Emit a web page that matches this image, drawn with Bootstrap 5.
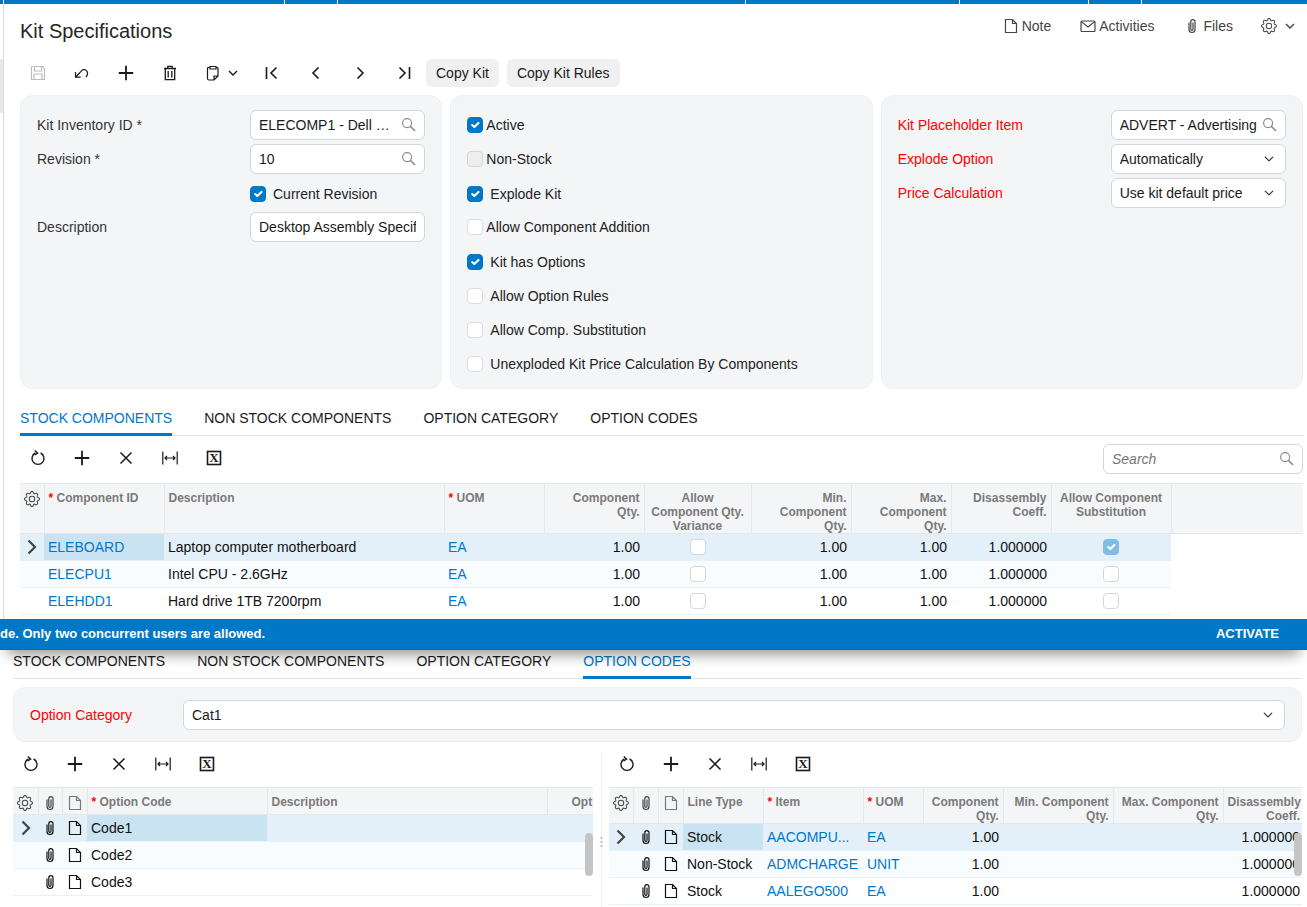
<!DOCTYPE html>
<html lang="en">
<head>
<meta charset="utf-8">
<title>Kit Specifications</title>
<link href="https://cdn.jsdelivr.net/npm/bootstrap@5.3.0/dist/css/bootstrap.min.css" rel="stylesheet">
<style>
:root{--ac:#0078c8;--line:#e6e7e9;--pan:#f4f5f7}
html,body{height:907px;overflow:hidden}
body{font-family:"Liberation Sans",Arial,sans-serif;font-size:14px;color:#1a1a1a;background:#fff;line-height:20px}
.strip{height:4px;background:var(--ac) linear-gradient(#fff,#fff) no-repeat;background-image:linear-gradient(#fff,#fff),linear-gradient(#fff,#fff),linear-gradient(#fff,#fff),linear-gradient(#fff,#fff),linear-gradient(#fff,#fff),linear-gradient(#fff,#fff),linear-gradient(#fff,#fff);background-size:1px 100%;background-repeat:no-repeat;background-position:3px 0,284px 0,337px 0,745px 0,959px 0,1088px 0,1141px 0}
.ic{width:16px;height:16px;display:block;fill:none;stroke:currentColor;stroke-width:1.2;flex:none}
.ic-f{fill:currentColor;stroke:none}
.upper{height:615px;overflow:hidden}
.edge{width:3px;flex:none}
.edge i{display:block;height:54px;margin-top:55px;background:#e8e8e8}
.upin{flex:1;min-width:0;border-left:1px solid #d9d9d9;padding:0 4px 0 16px}
.pg-title{font-size:20px;line-height:24px;color:#262626;padding-top:15px;margin:0;font-weight:400}
.titlerow{height:55px}
.acts{padding-top:10px;padding-right:8px;color:#444;line-height:24px}
.acts>span{display:flex;align-items:center;gap:3px}
.acts .a1{margin-right:29px}.acts .a2{margin-right:30px}.acts .a3{margin-right:28px}
.tbar{height:28px;margin-left:-4px}
.tb{width:44px;height:28px;padding:0;border:0;display:flex;align-items:center;justify-content:center;color:#1a1a1a;border-radius:0;flex:none}
.tb-w{width:58px;gap:7px}
.tb-dim{color:#bdbdbd}
.ic-s{width:10px;height:10px}
.copybtn{height:28px;background:#f0f0f0;border:0;border-radius:6px;padding:0 10px;font-size:14px;color:#1a1a1a;margin-right:8px;line-height:28px}
.tbar .copybtn:first-of-type{margin-left:4px}
.panels{margin-top:8px;height:294px;gap:8px}
.pan{background:var(--pan);border:1px solid #eef0f2;border-radius:12px;flex:1 1 0;min-width:0;padding:12px 16px 0}
.frow{height:34px;display:flex;align-items:center}
.flab{width:213px;flex:none;color:#333}
.req{color:#f00}
.fval{width:175px;position:relative;flex:none}
.fld{height:30px;border:1px solid #d5d6d9;border-radius:6px;padding:0 8px;font-size:14px;color:#1a1a1a;background-color:#fff;box-shadow:none;line-height:28px;font-family:inherit}
.fld.pe{padding-right:30px;text-overflow:ellipsis}
.fld.pe2{padding-right:28px}
.form-select.fld{background-size:12px 10px;background-position:right 10px center;padding-right:26px}
.srch{position:absolute;right:9px;top:7px;color:#8a8a8a;width:15px;height:15px}
.form-check-input.cb{width:16px;height:16px;margin:0;border:1px solid #dcdcdc;border-radius:4px;flex:none;background-color:#fff;opacity:1}
.form-check-input.cb:checked{background-color:var(--ac);border-color:var(--ac);background-size:14px}
.form-check-input.cb:disabled{background-color:#eee;opacity:1;border-color:#d4d4d4}
.cbw{display:flex;align-items:center;gap:7px;color:#222}
.cbn{gap:3px}
.up1{margin-top:1px;margin-bottom:-1px}
.tabs{height:35px;margin-top:12px;border-bottom:1px solid #e2e3e5;flex-wrap:nowrap}
.tabs .nav-link{padding:0;margin-right:32px;height:35px;line-height:34px;color:#1a1a1a;font-size:14px;text-transform:uppercase;border-radius:0}
.tabs .nav-link.active{color:var(--ac);border-bottom:3px solid var(--ac)}
.gtool{height:47px;padding-top:8px}
.gtool-i{margin-left:-4px}
.gs{width:200px;position:relative}
.fld.gi{font-style:italic;padding-right:28px}
.fld.gi::placeholder{color:#777}
.gclip{overflow:hidden;position:relative}
.grid{margin:0;table-layout:fixed;border-collapse:collapse;font-size:14px}
.grid.table>:not(caption)>*>*{padding:0 4px;background:transparent;box-shadow:none;border:0;color:#111;white-space:nowrap;overflow:hidden;vertical-align:middle;line-height:20px;height:27px}
.grid.table>thead>tr>th{background:var(--pan);font-size:12px;font-weight:700;color:#7a7a7a;line-height:14px;vertical-align:top;padding:7px 4px 0;border-top:1px solid var(--line);border-bottom:1px solid var(--line);border-right:1px solid var(--line);white-space:normal}
.grid.table>thead>tr>th:last-child{border-right:0}
.grid.table>tbody>tr>td{border-bottom:1px solid #e8f1f7}
.grid.table>tbody>tr.sel>td{background:#e3f0f9}
.grid.table>tbody>tr.alt>td{background:#f9fcfe}
.grid.table>tbody>tr>td.cur{background:#cae3f3}
.grid.table>tbody>tr>td.none{background:#fff;border-bottom:0}
.grid.table>thead>tr>th.ctr,.grid.table>tbody>tr>td.ctr{text-align:center}
.grid.table>thead>tr>th.rt,.grid.table>tbody>tr>td.rt{text-align:right}
.grid.table>thead>tr>th.ico{padding:7px 0 0}
.grid.table>tbody>tr>td.ico{padding:0}
.grid.table>thead>tr>th.np{white-space:nowrap}
.grid a{color:var(--ac);text-decoration:none}
.grid .ic{margin:0 auto}
.grid .form-check-input.cb{display:block;margin:0 auto;border-color:#d8d6d8}
.grid .form-check-input.cb:checked:disabled{background-color:#7fbce6;border-color:#7fbce6}
.gic{color:#444}
.rowh th{height:58px}
.rowh2 th{height:45px}
.t1{width:1283px}
.t1 col:nth-child(1){width:24px}.t1 col:nth-child(2){width:120px}.t1 col:nth-child(3){width:280px}.t1 col:nth-child(4),.t1 col:nth-child(5){width:100px}.t1 col:nth-child(6){width:107px}.t1 col:nth-child(7),.t1 col:nth-child(8),.t1 col:nth-child(9){width:100px}.t1 col:nth-child(10){width:120px}.t1 col:nth-child(11){width:132px}
.t2{width:674px}
.t2 col:nth-child(1){width:25px}.t2 col:nth-child(2){width:24px}.t2 col:nth-child(3){width:25px}.t2 col:nth-child(4){width:180px}.t2 col:nth-child(5){width:280px}.t2 col:nth-child(6){width:140px}
.t3{width:695px}
.t3 col:nth-child(1){width:24px}.t3 col:nth-child(2),.t3 col:nth-child(3){width:25px}.t3 col:nth-child(4){width:80px}.t3 col:nth-child(5){width:100px}.t3 col:nth-child(6){width:60px}.t3 col:nth-child(7){width:80px}.t3 col:nth-child(8),.t3 col:nth-child(9){width:110px}.t3 col:nth-child(10){width:81px}
.pl24{padding-left:24px!important}
.banner{height:31px;background:var(--ac);color:#fff;font-weight:700;font-size:13px;position:relative;z-index:3;box-shadow:0 12px 14px -8px rgba(0,0,0,.45);line-height:30px;padding-right:28px;border-bottom:1px solid #0068ad}
.lower{height:257px;overflow:hidden;padding:0 5px 0 13px}
.tabs2{height:29px;margin-top:0}
.tabs2 .nav-link{height:29px;line-height:22px}
.catpan{margin-top:8px;height:55px;padding:12px 16px;display:flex;align-items:center;flex:none}
.catlab{width:153px;flex:none;color:#f00}
.lower .form-select.fld{flex:1}
.split{height:165px}
.gleft{width:580px;flex:none;position:relative}
.gright{flex:1;min-width:0;position:relative}
.splitter{width:16px;flex:none;position:relative;margin-top:9px}
.splitter::before{content:"";display:block;width:1px;height:100%;margin-left:8px;background:#efefef}
.sdots{position:absolute;left:7px;top:85px;width:3px;height:11px;background:radial-gradient(circle,#bdbdbd 1px,transparent 1.2px) 0 0/3px 4px repeat-y}
.gt2{height:45px;padding-top:8px;padding-bottom:7px}
.gleft .gt2{margin-left:-4px}
.gright .gt2{margin-left:-4px}
.vbar{position:absolute;right:0;top:91px;width:8px;height:43px;background:#c4c4c4;border-radius:4px}
.gright .vbar{right:0}
.vtrack{position:absolute;right:0;top:91px;bottom:0;width:8px;background:#fff}
</style>
</head>
<body>
<svg width="0" height="0" class="position-absolute">
<defs>
<symbol id="i-doc" viewBox="0 0 16 16"><path d="M2.5 1.5h7l4 4v9h-11z M9.5 1.5v4h4"/></symbol>
<symbol id="i-clip" viewBox="0 0 16 16"><path d="M5 4.5v7a3 3 0 0 0 6 0V3.7a2.1 2.1 0 0 0-4.2 0v7.5a1.1 1.1 0 0 0 2.2 0V4.5"/></symbol>
<symbol id="i-mail" viewBox="0 0 16 16"><rect x="1" y="3" width="14" height="10.5" rx="1"/><path d="M1.3 3.6 8 9l6.7-5.4"/></symbol>
<symbol id="i-gear" viewBox="0 0 16 16"><path d="M8 4.754a3.246 3.246 0 1 0 0 6.492 3.246 3.246 0 0 0 0-6.492zM5.754 8a2.246 2.246 0 1 1 4.492 0 2.246 2.246 0 0 1-4.492 0z"/><path d="M9.796 1.343c-.527-1.79-3.065-1.79-3.592 0l-.094.319a.873.873 0 0 1-1.255.52l-.292-.16c-1.64-.892-3.433.902-2.54 2.541l.159.292a.873.873 0 0 1-.52 1.255l-.319.094c-1.79.527-1.79 3.065 0 3.592l.319.094a.873.873 0 0 1 .52 1.255l-.16.292c-.892 1.64.901 3.434 2.541 2.54l.292-.159a.873.873 0 0 1 1.255.52l.094.319c.527 1.79 3.065 1.79 3.592 0l.094-.319a.873.873 0 0 1 1.255-.52l.292.16c1.64.893 3.434-.902 2.54-2.541l-.159-.292a.873.873 0 0 1 .52-1.255l.319-.094c1.79-.527 1.79-3.065 0-3.592l-.319-.094a.873.873 0 0 1-.52-1.255l.16-.292c.893-1.64-.902-3.433-2.541-2.54l-.292.159a.873.873 0 0 1-1.255-.52l-.094-.319zm-2.633.283c.246-.835 1.428-.835 1.674 0l.094.319a1.873 1.873 0 0 0 2.693 1.115l.291-.16c.764-.415 1.6.42 1.184 1.185l-.159.292a1.873 1.873 0 0 0 1.116 2.692l.318.094c.835.246.835 1.428 0 1.674l-.319.094a1.873 1.873 0 0 0-1.115 2.693l.16.291c.415.764-.42 1.6-1.185 1.184l-.291-.159a1.873 1.873 0 0 0-2.693 1.116l-.094.318c-.246.835-1.428.835-1.674 0l-.094-.319a1.873 1.873 0 0 0-2.692-1.115l-.292.16c-.764.415-1.6-.42-1.184-1.185l.159-.291A1.873 1.873 0 0 0 1.945 8.93l-.319-.094c-.835-.246-.835-1.428 0-1.674l.319-.094A1.873 1.873 0 0 0 3.06 4.377l-.16-.292c-.415-.764.42-1.6 1.185-1.184l.292.159a1.873 1.873 0 0 0 2.692-1.115l.094-.319z"/></symbol>
<symbol id="i-down" viewBox="0 0 10 10"><path d="M1 3l4 4 4-4" stroke-width="1.4"/></symbol>
<symbol id="i-search" viewBox="0 0 16 16"><circle cx="6.5" cy="6.5" r="4.8"/><path d="M10 10l5 5" stroke-width="1.6"/></symbol>
<symbol id="i-save" viewBox="0 0 16 16"><path d="M1.5 1.5h11l2 2v11h-13z M4.5 1.5v4.5h7v-4.5 M4 14.5v-5.5h8v5.5"/></symbol>
<symbol id="i-undo" viewBox="0 0 16 16"><path d="M1.5 7v5.2h5.2 M1.7 12 7 6.3a3.6 3.6 0 0 1 6 0c1 1.7.7 3.6-1 5.7"/></symbol>
<symbol id="i-plus" viewBox="0 0 16 16"><path d="M8 .8v14.4M.8 8h14.4" stroke-width="1.8"/></symbol>
<symbol id="i-trash" viewBox="0 0 16 16"><path d="M2 3.5h12 M5.8 3.5V1.3h4.4v2.2 M3.3 3.5v11.2h9.4V3.5 M6.2 6v6.5 M9.8 6v6.5" stroke-width="1.3"/></symbol>
<symbol id="i-board" viewBox="0 0 16 16"><path d="M5 2.5H3.5a1 1 0 0 0-1 1v10a1.5 1.5 0 0 0 1.5 1.5h5l4-4v-7.5a1 1 0 0 0-1-1H11 M5 1.5h6v2.5H5z M9 15v-4h4"/></symbol>
<symbol id="i-first" viewBox="0 0 16 16"><path d="M2.5 2v12 M12.5 2.5 7 8l5.5 5.5" stroke-width="1.6"/></symbol>
<symbol id="i-prev" viewBox="0 0 16 16"><path d="M10.5 2.5 5 8l5.500 5.500" stroke-width="1.6"/></symbol>
<symbol id="i-next" viewBox="0 0 16 16"><path d="M5.500 2.500 11 8l-5.500 5.500" stroke-width="1.6"/></symbol>
<symbol id="i-last" viewBox="0 0 16 16"><path d="M13.500 2v12 M3.500 2.500 9 8l-5.500 5.500" stroke-width="1.6"/></symbol>
<symbol id="i-refresh" viewBox="0 0 16 16"><path d="M5.400 3a6 6 0 1 0 5.200 0" stroke-width="1.400"/><path d="M5.200 .8 8 3.400 5 5.200" stroke-width="1.400" transform="translate(-.4 -.2)"/></symbol>
<symbol id="i-x" viewBox="0 0 16 16"><path d="M2.500 2.500l11 11m0-11-11 11" stroke-width="1.500"/></symbol>
<symbol id="i-fit" viewBox="0 0 16 16"><path d="M.8 1.500v13 M15.200 1.500v13 M3 8h10 M5 6 3 8l2 2 M11 6l2 2-2 2"/></symbol>
<symbol id="i-xl" viewBox="0 0 16 16"><rect x="1.500" y="1.500" width="13" height="13" stroke-width="1.600"/><text x="8" y="12.300" text-anchor="middle" font-family="Liberation Serif,serif" font-weight="700" font-size="13" fill="currentColor" stroke="none">X</text></symbol>
<symbol id="i-exp" viewBox="0 0 16 16"><path d="M4.500 1.500 11 8l-6.500 6.500" stroke-width="2.200"/></symbol>
</defs>
</svg>

<div class="strip"></div>

<div class="upper d-flex">
  <div class="edge"><i></i></div>
  <div class="upin">
    <div class="titlerow d-flex justify-content-between align-items-start">
      <h1 class="pg-title">Kit Specifications</h1>
      <div class="acts d-flex">
        <span class="a1"><svg class="ic"><use href="#i-doc"/></svg>Note</span>
        <span class="a2"><svg class="ic"><use href="#i-mail"/></svg>Activities</span>
        <span class="a3"><svg class="ic"><use href="#i-clip"/></svg>Files</span>
        <span class="gap-2"><svg class="ic ic-f"><use href="#i-gear"/></svg><svg class="ic ic-s"><use href="#i-down"/></svg></span>
      </div>
    </div>

    <div class="tbar d-flex align-items-center">
      <button class="btn tb tb-dim"><svg class="ic"><use href="#i-save"/></svg></button>
      <button class="btn tb"><svg class="ic"><use href="#i-undo"/></svg></button>
      <button class="btn tb"><svg class="ic"><use href="#i-plus"/></svg></button>
      <button class="btn tb"><svg class="ic"><use href="#i-trash"/></svg></button>
      <button class="btn tb tb-w"><svg class="ic"><use href="#i-board"/></svg><svg class="ic ic-s"><use href="#i-down"/></svg></button>
      <button class="btn tb"><svg class="ic"><use href="#i-first"/></svg></button>
      <button class="btn tb"><svg class="ic"><use href="#i-prev"/></svg></button>
      <button class="btn tb"><svg class="ic"><use href="#i-next"/></svg></button>
      <button class="btn tb"><svg class="ic"><use href="#i-last"/></svg></button>
      <button class="btn copybtn">Copy Kit</button>
      <button class="btn copybtn">Copy Kit Rules</button>
    </div>

    <div class="panels d-flex">
      <div class="pan">
        <div class="frow"><div class="flab">Kit Inventory ID *</div><div class="fval"><input class="form-control fld pe" value="ELECOMP1 - Dell Desktop Kit" readonly><svg class="ic srch"><use href="#i-search"/></svg></div></div>
        <div class="frow"><div class="flab">Revision *</div><div class="fval"><input class="form-control fld pe" value="10" readonly><svg class="ic srch"><use href="#i-search"/></svg></div></div>
        <div class="frow up1"><div class="flab"></div><label class="cbw"><input type="checkbox" class="form-check-input cb" checked>Current Revision</label></div>
        <div class="frow"><div class="flab">Description</div><div class="fval"><input class="form-control fld" value="Desktop Assembly Specification" readonly></div></div>
      </div>
      <div class="pan">
        <div class="frow"><label class="cbw cbn"><input type="checkbox" class="form-check-input cb" checked>Active</label></div>
        <div class="frow"><label class="cbw cbn"><input type="checkbox" class="form-check-input cb" disabled>Non-Stock</label></div>
        <div class="frow up1"><label class="cbw"><input type="checkbox" class="form-check-input cb" checked>Explode Kit</label></div>
        <div class="frow"><label class="cbw cbn"><input type="checkbox" class="form-check-input cb">Allow Component Addition</label></div>
        <div class="frow up1"><label class="cbw"><input type="checkbox" class="form-check-input cb" checked>Kit has Options</label></div>
        <div class="frow up1"><label class="cbw"><input type="checkbox" class="form-check-input cb">Allow Option Rules</label></div>
        <div class="frow up1"><label class="cbw"><input type="checkbox" class="form-check-input cb">Allow Comp. Substitution</label></div>
        <div class="frow up1"><label class="cbw"><input type="checkbox" class="form-check-input cb">Unexploded Kit Price Calculation By Components</label></div>
      </div>
      <div class="pan">
        <div class="frow"><div class="flab req">Kit Placeholder Item</div><div class="fval"><input class="form-control fld pe2" value="ADVERT - Advertising" readonly><svg class="ic srch"><use href="#i-search"/></svg></div></div>
        <div class="frow"><div class="flab req">Explode Option</div><div class="fval"><select class="form-select fld"><option>Automatically</option></select></div></div>
        <div class="frow"><div class="flab req">Price Calculation</div><div class="fval"><select class="form-select fld"><option>Use kit default price</option></select></div></div>
      </div>
    </div>

    <ul class="nav tabs">
      <li class="nav-item"><a class="nav-link active" href="#">Stock Components</a></li>
      <li class="nav-item"><a class="nav-link" href="#">Non Stock Components</a></li>
      <li class="nav-item"><a class="nav-link" href="#">Option Category</a></li>
      <li class="nav-item"><a class="nav-link" href="#">Option Codes</a></li>
    </ul>

    <div class="gtool d-flex justify-content-between align-items-start">
      <div class="d-flex gtool-i">
        <button class="btn tb"><svg class="ic"><use href="#i-refresh"/></svg></button>
        <button class="btn tb"><svg class="ic"><use href="#i-plus"/></svg></button>
        <button class="btn tb"><svg class="ic"><use href="#i-x"/></svg></button>
        <button class="btn tb"><svg class="ic"><use href="#i-fit"/></svg></button>
        <button class="btn tb"><svg class="ic"><use href="#i-xl"/></svg></button>
      </div>
      <div class="gs"><input class="form-control fld gi" placeholder="Search"><svg class="ic srch"><use href="#i-search"/></svg></div>
    </div>

    <div class="gclip">
      <table class="table grid t1">
        <colgroup><col><col><col><col><col><col><col><col><col><col><col></colgroup>
        <thead><tr class="rowh">
          <th class="ico"><svg class="ic ic-f gic"><use href="#i-gear"/></svg></th>
          <th class="np"><span class="req">*</span> Component ID</th>
          <th>Description</th>
          <th class="np"><span class="req">*</span> UOM</th>
          <th class="rt">Component Qty.</th>
          <th class="ctr">Allow Component Qty. Variance</th>
          <th class="rt">Min. Component Qty.</th>
          <th class="rt">Max. Component Qty.</th>
          <th class="rt">Disassembly Coeff.</th>
          <th class="ctr">Allow Component Substitution</th>
          <th></th>
        </tr></thead>
        <tbody>
          <tr class="sel"><td class="ico"><svg class="ic ic-f gic d-none"></svg><svg class="ic gic"><use href="#i-exp"/></svg></td><td class="cur"><a href="#">ELEBOARD</a></td><td>Laptop computer motherboard</td><td><a href="#">EA</a></td><td class="rt">1.00</td><td><input type="checkbox" class="form-check-input cb"></td><td class="rt">1.00</td><td class="rt">1.00</td><td class="rt">1.000000</td><td><input type="checkbox" class="form-check-input cb" checked disabled></td><td class="none"></td></tr>
          <tr class="alt"><td class="ico"></td><td><a href="#">ELECPU1</a></td><td>Intel CPU - 2.6GHz</td><td><a href="#">EA</a></td><td class="rt">1.00</td><td><input type="checkbox" class="form-check-input cb"></td><td class="rt">1.00</td><td class="rt">1.00</td><td class="rt">1.000000</td><td><input type="checkbox" class="form-check-input cb"></td><td class="none"></td></tr>
          <tr><td class="ico"></td><td><a href="#">ELEHDD1</a></td><td>Hard drive 1TB 7200rpm</td><td><a href="#">EA</a></td><td class="rt">1.00</td><td><input type="checkbox" class="form-check-input cb"></td><td class="rt">1.00</td><td class="rt">1.00</td><td class="rt">1.000000</td><td><input type="checkbox" class="form-check-input cb"></td><td class="none"></td></tr>
        </tbody>
      </table>
    </div>
  </div>
</div>

<div class="banner d-flex justify-content-between">
  <span>de. Only two concurrent users are allowed.</span>
  <span>ACTIVATE</span>
</div>

<div class="lower d-flex flex-column">
  <ul class="nav tabs tabs2 flex-none">
    <li class="nav-item"><a class="nav-link" href="#">Stock Components</a></li>
    <li class="nav-item"><a class="nav-link" href="#">Non Stock Components</a></li>
    <li class="nav-item"><a class="nav-link" href="#">Option Category</a></li>
    <li class="nav-item"><a class="nav-link active" href="#">Option Codes</a></li>
  </ul>
  <div class="pan catpan">
    <div class="catlab">Option Category</div>
    <select class="form-select fld"><option>Cat1</option></select>
  </div>
  <div class="split d-flex">
    <div class="gleft">
      <div class="gt2 d-flex">
        <button class="btn tb"><svg class="ic"><use href="#i-refresh"/></svg></button>
        <button class="btn tb"><svg class="ic"><use href="#i-plus"/></svg></button>
        <button class="btn tb"><svg class="ic"><use href="#i-x"/></svg></button>
        <button class="btn tb"><svg class="ic"><use href="#i-fit"/></svg></button>
        <button class="btn tb"><svg class="ic"><use href="#i-xl"/></svg></button>
      </div>
      <div class="gclip">
        <table class="table grid t2">
          <colgroup><col><col><col><col><col><col></colgroup>
          <thead><tr class="rowh2">
            <th class="ico"><svg class="ic ic-f gic"><use href="#i-gear"/></svg></th>
            <th class="ico"><svg class="ic gic"><use href="#i-clip"/></svg></th>
            <th class="ico"><svg class="ic"><use href="#i-doc"/></svg></th>
            <th class="np"><span class="req">*</span> Option Code</th>
            <th>Description</th>
            <th class="np pl24">Optional</th>
          </tr></thead>
          <tbody>
            <tr class="sel"><td class="ico"><svg class="ic gic"><use href="#i-exp"/></svg></td><td class="ico"><svg class="ic"><use href="#i-clip"/></svg></td><td class="ico"><svg class="ic"><use href="#i-doc"/></svg></td><td class="cur">Code1</td><td></td><td></td></tr>
            <tr class="alt"><td class="ico"></td><td class="ico"><svg class="ic"><use href="#i-clip"/></svg></td><td class="ico"><svg class="ic"><use href="#i-doc"/></svg></td><td>Code2</td><td></td><td></td></tr>
            <tr><td class="ico"></td><td class="ico"><svg class="ic"><use href="#i-clip"/></svg></td><td class="ico"><svg class="ic"><use href="#i-doc"/></svg></td><td>Code3</td><td></td><td></td></tr>
          </tbody>
        </table>
      </div>
      <div class="vbar"></div>
    </div>
    <div class="splitter"><div class="sdots"></div></div>
    <div class="gright">
      <div class="gt2 d-flex">
        <button class="btn tb"><svg class="ic"><use href="#i-refresh"/></svg></button>
        <button class="btn tb"><svg class="ic"><use href="#i-plus"/></svg></button>
        <button class="btn tb"><svg class="ic"><use href="#i-x"/></svg></button>
        <button class="btn tb"><svg class="ic"><use href="#i-fit"/></svg></button>
        <button class="btn tb"><svg class="ic"><use href="#i-xl"/></svg></button>
      </div>
      <div class="gclip">
        <table class="table grid t3">
          <colgroup><col><col><col><col><col><col><col><col><col><col></colgroup>
          <thead><tr class="rowh2">
            <th class="ico"><svg class="ic ic-f gic"><use href="#i-gear"/></svg></th>
            <th class="ico"><svg class="ic gic"><use href="#i-clip"/></svg></th>
            <th class="ico"><svg class="ic"><use href="#i-doc"/></svg></th>
            <th>Line Type</th>
            <th class="np"><span class="req">*</span> Item</th>
            <th class="np"><span class="req">*</span> UOM</th>
            <th class="rt">Component Qty.</th>
            <th class="rt">Min. Component Qty.</th>
            <th class="rt">Max. Component Qty.</th>
            <th class="rt">Disassembly Coeff.</th>
          </tr></thead>
          <tbody>
            <tr class="sel"><td class="ico"><svg class="ic gic"><use href="#i-exp"/></svg></td><td class="ico"><svg class="ic"><use href="#i-clip"/></svg></td><td class="ico"><svg class="ic"><use href="#i-doc"/></svg></td><td class="cur">Stock</td><td><a href="#">AACOMPU...</a></td><td><a href="#">EA</a></td><td class="rt">1.00</td><td></td><td></td><td class="rt">1.000000</td></tr>
            <tr class="alt"><td class="ico"></td><td class="ico"><svg class="ic"><use href="#i-clip"/></svg></td><td class="ico"><svg class="ic"><use href="#i-doc"/></svg></td><td>Non-Stock</td><td><a href="#">ADMCHARGE</a></td><td><a href="#">UNIT</a></td><td class="rt">1.00</td><td></td><td></td><td class="rt">1.000000</td></tr>
            <tr><td class="ico"></td><td class="ico"><svg class="ic"><use href="#i-clip"/></svg></td><td class="ico"><svg class="ic"><use href="#i-doc"/></svg></td><td>Stock</td><td><a href="#">AALEGO500</a></td><td><a href="#">EA</a></td><td class="rt">1.00</td><td></td><td></td><td class="rt">1.000000</td></tr>
          </tbody>
        </table>
      </div>
      <div class="vbar"></div>
    </div>
  </div>
</div>
<script src="https://cdn.jsdelivr.net/npm/bootstrap@5.3.0/dist/js/bootstrap.bundle.min.js"></script>
</body>
</html>
